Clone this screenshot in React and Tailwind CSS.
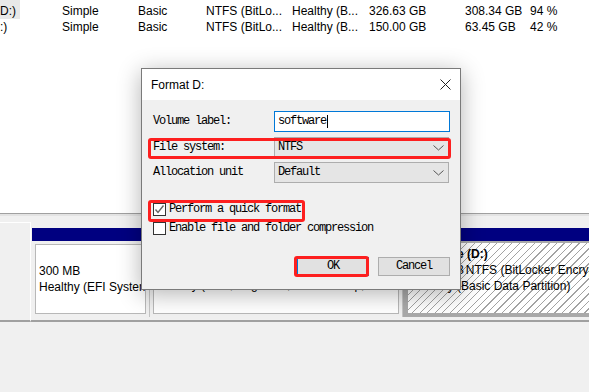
import React from "react";

const ui = "font-['Liberation_Sans',Arial,sans-serif]";
const sim = "font-['Liberation_Mono','Noto_Sans_CJK_SC',monospace] text-[12px] leading-[13px] tracking-[-1.2px] text-black";

const rows = [
    ["D:)", "Simple", "Basic", "NTFS (BitLo...", "Healthy (B...", "326.63 GB", "308.34 GB", "94 %"],
    [":)", "Simple", "Basic", "NTFS (BitLo...", "Healthy (B...", "150.00 GB", "63.45 GB", "42 %"],
];

function Chevron() {
    return (
        <svg width="11" height="6" viewBox="0 0 11 6" className="shrink-0">
            <polyline points="0.5,0.5 5.5,5 10.5,0.5" fill="none" stroke="#555" strokeWidth="1" />
        </svg>
    );
}

function Check({ checked }) {
    return (
        <div className="w-[13px] h-[13px] bg-white border border-[#333] flex items-center justify-center shrink-0">
            {checked && (
                <svg width="11" height="11" viewBox="0 0 11 11">
                    <polyline points="1.5,5.5 4,8.5 9.5,1.5" fill="none" stroke="#666" strokeWidth="1.4" />
                </svg>
            )}
        </div>
    );
}

function Select({ value }) {
    return (
        <div className="w-[175px] h-[21px] bg-[#e5e5e5] border border-[#adadad] flex items-center justify-between pl-[3px] pr-[4px]">
            <span className={sim}>{value}</span>
            <Chevron />
        </div>
    );
}

function FormatDialog() {
    return (
        <div className="absolute left-[141px] top-[68px] w-[320px] h-[222px] border border-[#7a7a7a] bg-[#f0f0f0] shadow-[0_4px_22px_rgba(0,0,0,0.3)] flex flex-col">
            {/* Title bar */}
            <div className="h-[31px] bg-white flex items-center justify-between pl-[9px] pr-[9px] shrink-0">
                <span className={`${ui} text-[12px] text-black`}>Format D:</span>
                <svg width="11" height="11" viewBox="0 0 11 11">
                    <path d="M0.5 0.5 L10.5 10.5 M10.5 0.5 L0.5 10.5" stroke="#222" strokeWidth="1" />
                </svg>
            </div>

            {/* Body */}
            <div className="flex flex-col pl-[11px] pt-[11px]">
                <div className="flex items-center h-[21px]">
                    <span className={`${sim} w-[121px]`}>Volume label:</span>
                    <div className="w-[176px] h-[21px] bg-white border border-[#0078d7] flex items-center pl-[3px]">
                        <span className={sim}>software</span>
                        <span className="w-px h-[13px] bg-black ml-px" />
                    </div>
                </div>
                <div className="flex items-center h-[21px] mt-[5px]">
                    <span className={`${sim} w-[121px]`}>File system:</span>
                    <Select value="NTFS" />
                </div>
                <div className="flex items-center h-[21px] mt-[4px]">
                    <span className={`${sim} w-[121px]`}>Allocation unit</span>
                    <Select value="Default" />
                </div>
                <div className="flex items-center h-[13px] gap-[3px] mt-[20px]">
                    <Check checked />
                    <span className={sim}>Perform a quick format</span>
                </div>
                <div className="flex items-center h-[13px] gap-[3px] mt-[6px]">
                    <Check />
                    <span className={sim}>Enable file and folder compression</span>
                </div>
                <div className="flex justify-end gap-[9px] mt-[22px] pr-[10px]">
                    <div className={`${sim} w-[72px] h-[19px] bg-[#e1e1e1] border border-[#0078d7] flex items-center justify-center`}>OK</div>
                    <div className={`${sim} w-[72px] h-[19px] bg-[#e1e1e1] border border-[#adadad] flex items-center justify-center`}>Cancel</div>
                </div>
            </div>

            {/* annotation boxes */}
            <div className="absolute left-[6px] top-[69px] w-[303px] h-[21px] border-[3px] border-[#fd1f1f] rounded-[3px]" />
            <div className="absolute left-[6px] top-[131px] w-[157px] h-[22px] border-[3px] border-[#fd1f1f] rounded-[3px]" />
            <div className="absolute left-[152px] top-[187px] w-[75px] h-[21px] border-[3px] border-[#fd1f1f] rounded-[3px]" />
        </div>
    );
}

export default function App() {
    const hatch = "bg-[repeating-linear-gradient(135deg,#ffffff_0px,#ffffff_4.3px,#a3a3a3_4.3px,#a3a3a3_5.3px)]";

    return (
        <div className={`relative w-[589px] h-[392px] overflow-hidden bg-[#f0f0f0] ${ui} text-[12px] text-black`}>
            {/* Volume list */}
            <div className="h-[213px] bg-white pt-[3px]">
                {rows.map((r, i) => (
                    <div key={i} className="grid grid-cols-[62px_76px_68px_86px_77px_96px_65px_1fr] h-[16px] leading-[16px]">
                        {r.map((c, j) => (
                            <div key={j} className="whitespace-nowrap">
                                {j === 0 && i === 0 ? (
                                    <span className="inline-block w-[20px] -mt-[3px] pt-[3px] bg-[#e8e8e8]">{c}</span>
                                ) : (
                                    c
                                )}
                            </div>
                        ))}
                    </div>
                ))}
            </div>
            <div className="h-[3px] border-t border-[#a0a0a0] bg-[#e3e3e3]" />
            <div className="h-[6px]" />

            {/* Disk map */}
            <div className="flex h-[100px]">
                <div className="w-[31px] shrink-0 border-t border-r border-white border-b-2 border-b-[#a0a0a0] bg-[#f0f0f0]" />
                <div className="flex-1 min-w-0 flex flex-col border-b-2 border-[#a0a0a0] pb-[3px]">
                    <div className="mt-[6px] h-[13px] bg-[#000080] ml-[1px] shrink-0" />
                    <div className="flex flex-1 ml-[1px] min-w-0">
                        <div className="w-[118px] shrink-0 p-[3px] border-r border-[#c4c4c4]">
                            <div className="h-full bg-white border border-[#b8b8b8] pl-[3px] pt-[2px] overflow-hidden whitespace-nowrap leading-[16px]">
                                <div>&nbsp;</div>
                                <div>300 MB</div>
                                <div>Healthy (EFI System Partition)</div>
                            </div>
                        </div>
                        <div className="w-[253px] shrink-0 p-[3px] border-r border-[#c4c4c4]">
                            <div className="h-full bg-white border border-[#b8b8b8] pl-[3px] overflow-hidden whitespace-nowrap leading-[16px]">
                                <div className="font-bold">(C:)</div>
                                <div>100.00 GB NTFS (BitLocker Encrypted)</div>
                                <div>Healthy (Boot, Page File, Crash Dump, Basic Data Partition)</div>
                            </div>
                        </div>
                        <div className={`flex-1 min-w-0 border-l-[5px] border-b-[4px] border-t-2 border-[#a9a9a9] ${hatch} pl-[5px] pt-[3px] overflow-hidden whitespace-nowrap leading-[16px]`}>
                            <div className="font-bold">Software (D:)</div>
                            <div><span className="tracking-[-0.8px]">326.63 GB </span>NTFS (BitLocker Encrypted)</div>
                            <div>Healthy (Basic Data Partition)</div>
                        </div>
                    </div>
                </div>
            </div>

            <FormatDialog />
        </div>
    );
}
